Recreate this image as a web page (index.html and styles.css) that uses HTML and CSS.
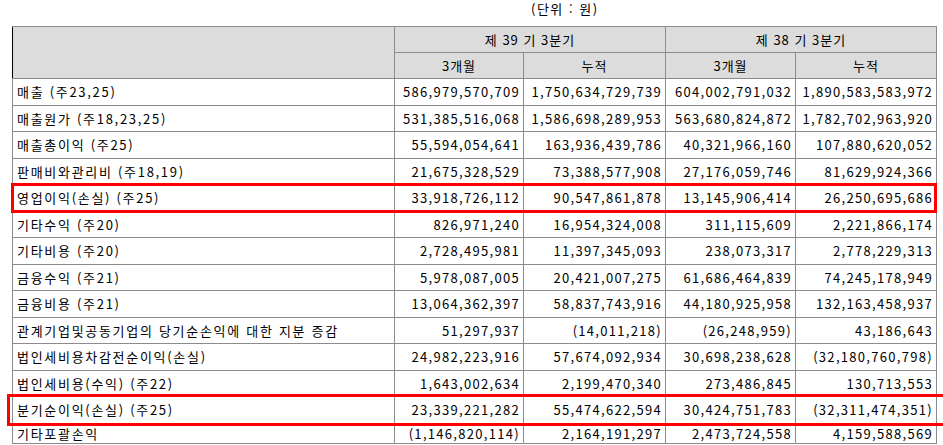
FILE: index.html
```html
<!DOCTYPE html>
<html lang="ko">
<head>
<meta charset="utf-8">
<link rel="stylesheet" href="styles.css">
</head>
<body>
<div class="page">
  <div class="unit">(단위 : 원)</div>
  <div class="wrap">
    <table class="fs">
      <colgroup>
        <col class="c-label"><col class="c-a"><col class="c-b"><col class="c-c"><col class="c-d">
      </colgroup>
      <thead>
        <tr class="h1">
          <th rowspan="2" class="blank"></th>
          <th colspan="2">제 39 기 3분기</th>
          <th colspan="2">제 38 기 3분기</th>
        </tr>
        <tr class="h2">
          <th>3개월</th><th>누적</th><th>3개월</th><th>누적</th>
        </tr>
      </thead>
      <tbody>
        <tr><td class="lbl">매출 (주23,25)</td><td>586,979,570,709</td><td>1,750,634,729,739</td><td>604,002,791,032</td><td>1,890,583,583,972</td></tr>
        <tr><td class="lbl">매출원가 (주18,23,25)</td><td>531,385,516,068</td><td>1,586,698,289,953</td><td>563,680,824,872</td><td>1,782,702,963,920</td></tr>
        <tr><td class="lbl">매출총이익 (주25)</td><td>55,594,054,641</td><td>163,936,439,786</td><td>40,321,966,160</td><td>107,880,620,052</td></tr>
        <tr><td class="lbl">판매비와관리비 (주18,19)</td><td>21,675,328,529</td><td>73,388,577,908</td><td>27,176,059,746</td><td>81,629,924,366</td></tr>
        <tr><td class="lbl">영업이익(손실) (주25)</td><td>33,918,726,112</td><td>90,547,861,878</td><td>13,145,906,414</td><td>26,250,695,686</td></tr>
        <tr><td class="lbl">기타수익 (주20)</td><td>826,971,240</td><td>16,954,324,008</td><td>311,115,609</td><td>2,221,866,174</td></tr>
        <tr><td class="lbl">기타비용 (주20)</td><td>2,728,495,981</td><td>11,397,345,093</td><td>238,073,317</td><td>2,778,229,313</td></tr>
        <tr><td class="lbl">금융수익 (주21)</td><td>5,978,087,005</td><td>20,421,007,275</td><td>61,686,464,839</td><td>74,245,178,949</td></tr>
        <tr><td class="lbl">금융비용 (주21)</td><td>13,064,362,397</td><td>58,837,743,916</td><td>44,180,925,958</td><td>132,163,458,937</td></tr>
        <tr><td class="lbl">관계기업및공동기업의 당기순손익에 대한 지분 증감</td><td>51,297,937</td><td>(14,011,218)</td><td>(26,248,959)</td><td>43,186,643</td></tr>
        <tr><td class="lbl">법인세비용차감전순이익(손실)</td><td>24,982,223,916</td><td>57,674,092,934</td><td>30,698,238,628</td><td>(32,180,760,798)</td></tr>
        <tr><td class="lbl">법인세비용(수익) (주22)</td><td>1,643,002,634</td><td>2,199,470,340</td><td>273,486,845</td><td>130,713,553</td></tr>
        <tr><td class="lbl">분기순이익(손실) (주25)</td><td>23,339,221,282</td><td>55,474,622,594</td><td>30,424,751,783</td><td>(32,311,474,351)</td></tr>
        <tr class="last"><td class="lbl">기타포괄손익</td><td>(1,146,820,114)</td><td>2,164,191,297</td><td>2,473,724,558</td><td>4,159,588,569</td></tr>
      </tbody>
    </table>
    <div class="mark mark-op"></div>
    <div class="mark mark-net"></div>
  </div>
</div>
</body>
</html>
```

FILE: styles.css
```css
html, body {
  margin: 0;
  padding: 0;
  background: #fff;
}
body {
  font-family: "Noto Sans CJK KR", "Noto Sans", sans-serif;
  font-size: 13px;
  color: #000;
  overflow: hidden;
}
.page {
  padding-left: 12px;
}
.unit {
  height: 26px;
  line-height: 18px;
  padding-top: 0;
  box-sizing: border-box;
  padding-left: 519px;
  letter-spacing: 1.5px;
}
.wrap {
  position: relative;
  width: 924px;
}
.fs {
  border-collapse: collapse;
  table-layout: fixed;
  width: 924px;
  border: 1px solid #000;
}
.c-label { width: 382px; }
.c-a { width: 129px; }
.c-b { width: 142px; }
.c-c { width: 130px; }
.c-d { width: 141px; }
.fs th {
  background: #dcdcdc;
  font-weight: normal;
  border: 1px solid #8c8c8c;
  height: 25px;
  padding: 0;
  text-align: center;
  letter-spacing: 1px;
}
.fs th.blank {
  border-left: 1px solid #000;
}
.fs td {
  border: 1px solid #8c8c8c;
  height: 25.5px;
  padding: 0 3px 0 0;
  text-align: right;
  white-space: nowrap;
  letter-spacing: 1.3px;
}
.fs td.lbl {
  text-align: left;
  padding: 0 0 0 4px;
  letter-spacing: 1.7px;
}
.fs tr.last td {
  height: 19px;
}
.mark {
  position: absolute;
  border: 3px solid #f00;
  box-sizing: border-box;
}
.mark-op {
  left: -1px;
  top: 157px;
  width: 926px;
  height: 30px;
}
.mark-net {
  left: -5px;
  top: 368px;
  width: 940px;
  height: 32px;
}
```
